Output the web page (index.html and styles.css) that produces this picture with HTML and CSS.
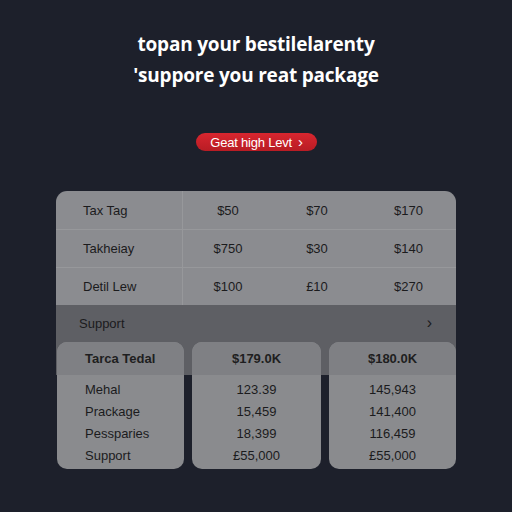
FILE: index.html
```html
<!DOCTYPE html>
<html>
<head>
<meta charset="utf-8">
<link rel="stylesheet" href="styles.css">
</head>
<body>
<div class="page">
  <h1 class="title">topan your bestilelarenty<br>'suppore you reat package</h1>
  <div class="cta-wrap"><a class="cta">Geat high Levt <span class="chev">›</span></a></div>
  <div class="table">
    <div class="row">
      <div class="lbl">Tax Tag</div><div class="val">$50</div><div class="val">$70</div><div class="val">$170</div>
    </div>
    <div class="row">
      <div class="lbl">Takheiay</div><div class="val">$750</div><div class="val">$30</div><div class="val">$140</div>
    </div>
    <div class="row">
      <div class="lbl">Detil Lew</div><div class="val">$100</div><div class="val">£10</div><div class="val">$270</div>
    </div>
  </div>
  <div class="support">
    <div class="support-bar"><span>Support</span><span class="arrow">›</span></div>
    <div class="cards">
      <div class="card">
        <div class="card-head left">Tarca Tedal</div>
        <div class="card-body left">
          <div>Mehal</div><div>Prackage</div><div>Pessparies</div><div>Support</div>
        </div>
      </div>
      <div class="card">
        <div class="card-head">$179.0K</div>
        <div class="card-body">
          <div>123.39</div><div>15,459</div><div>18,399</div><div>£55,000</div>
        </div>
      </div>
      <div class="card">
        <div class="card-head">$180.0K</div>
        <div class="card-body">
          <div>145,943</div><div>141,400</div><div>116,459</div><div>£55,000</div>
        </div>
      </div>
    </div>
  </div>
</div>
</body>
</html>
```

FILE: styles.css
```css
* { box-sizing: border-box; }
html, body { margin: 0; padding: 0; }
body {
  background: #1d202b;
  width: 512px;
  height: 512px;
  overflow: hidden;
  font-family: "Liberation Sans", Arial, sans-serif;
  color: #1b1b1d;
}
.page { padding-top: 29px; }
.title {
  margin: 0;
  text-align: center;
  color: #ffffff;
  font-family: "Open Sans", sans-serif;
  font-weight: 700;
  font-size: 19px;
  line-height: 31px;
  letter-spacing: -0.2px;
}
.cta-wrap {
  display: flex;
  justify-content: center;
  margin-top: 42px;
  padding-left: 1px;
}
.cta {
  display: inline-flex;
  align-items: center;
  height: 18px;
  width: 121px;
  justify-content: center;
  border-radius: 9px;
  background: linear-gradient(#d8262f, #b81c24);
  color: #fff;
  font-size: 13px;
  letter-spacing: -0.2px;
}
.chev { margin-left: 6px; font-size: 15px; line-height: 1; margin-top: -2px; }
.table {
  margin: 40px 56px 0 56px;
  background: #8b8c90;
  border-radius: 11px 11px 0 0;
  overflow: hidden;
}
.row {
  display: grid;
  grid-template-columns: 127px 90px 88px 1fr;
  height: 38px;
  align-items: center;
  border-top: 1px solid #97989b;
  font-size: 13px;
}
.row:first-child { border-top: none; }
.lbl {
  height: 100%;
  display: flex;
  align-items: center;
  padding-left: 27px;
  border-right: 1px solid #97989b;
}
.val { text-align: center; }
.support {
  margin: 0 56px;
  background: linear-gradient(#5e5f64 0, #5e5f64 70px, transparent 70px);
}
.support-bar {
  height: 37px;
  display: flex;
  align-items: center;
  justify-content: space-between;
  padding: 0 24px 0 23px;
  font-size: 13px;
  background: #5e5f64;
}
.arrow { font-size: 16px; margin-top: -2px; }
.cards {
  display: grid;
  grid-template-columns: 127px 129px 127px;
  column-gap: 8px;
  padding-left: 1px;
}
.card {
  background: #8a8b8e;
  border-radius: 10px;
  height: 127px;
  overflow: hidden;
}
.card-head {
  height: 33px;
  display: flex;
  align-items: center;
  justify-content: center;
  background: #7f8084;
  font-size: 13px;
  font-weight: 700;
  color: #1e1e20;
}
.card-head.left { justify-content: flex-start; padding-left: 28px; }
.card-body {
  padding-top: 4px;
  font-size: 13px;
  text-align: center;
}
.card-body div { height: 22px; line-height: 22px; }
.card-body.left { text-align: left; padding-left: 28px; }
```
